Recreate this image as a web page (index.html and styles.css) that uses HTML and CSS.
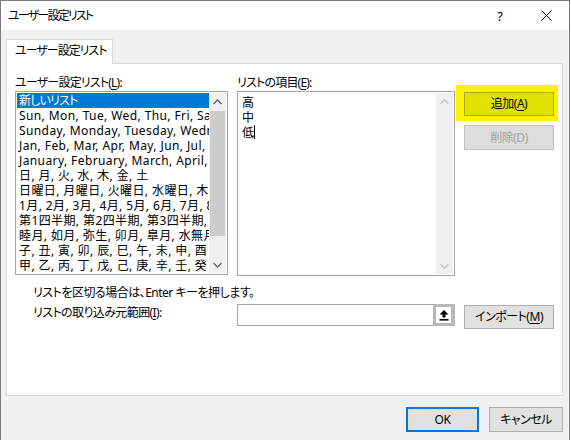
FILE: index.html
```html
<!DOCTYPE html>
<html lang="ja">
<head>
<meta charset="utf-8">
<title>ユーザー設定リスト</title>
<link rel="stylesheet" href="styles.css">
</head>
<body>
<div class="window">
  <div class="titlebar">
    <span class="title">ユーザー設定リスト</span>
    <span class="caption-btn help">?</span>
    <span class="caption-btn close">
      <svg width="11" height="11" viewBox="0 0 11 11"><path d="M0.5 0.5 L10.5 10.5 M10.5 0.5 L0.5 10.5" stroke="#000" stroke-width="1" fill="none"/></svg>
    </span>
  </div>
  <div class="client">
    <div class="tabs"><div class="tab">ユーザー設定リスト</div></div>
    <div class="panel">
      <div class="lists">
        <div class="col col-left">
          <div class="label">ユーザー設定リスト(<u>L</u>):</div>
          <div class="listbox">
            <ul class="items">
              <li class="selected">新しいリスト</li>
              <li>Sun, Mon, Tue, Wed, Thu, Fri, Sat</li>
              <li>Sunday, Monday, Tuesday, Wednesday, Thursday</li>
              <li>Jan, Feb, Mar, Apr, May, Jun, Jul, Aug</li>
              <li>January, February, March, April, May</li>
              <li>日, 月, 火, 水, 木, 金, 土</li>
              <li>日曜日, 月曜日, 火曜日, 水曜日, 木曜日</li>
              <li>1月, 2月, 3月, 4月, 5月, 6月, 7月, 8月</li>
              <li>第1四半期, 第2四半期, 第3四半期, 第4四半期</li>
              <li>睦月, 如月, 弥生, 卯月, 皐月, 水無月</li>
              <li>子, 丑, 寅, 卯, 辰, 巳, 午, 未, 申, 酉</li>
              <li>甲, 乙, 丙, 丁, 戊, 己, 庚, 辛, 壬, 癸</li>
            </ul>
            <div class="vscroll">
              <span class="arrow"><svg width="9" height="6" viewBox="0 0 9 6"><path d="M0.5 5 L4.5 1 L8.5 5" stroke="#606060" stroke-width="1.3" fill="none"/></svg></span>
              <span class="track"><span class="thumb"></span></span>
              <span class="arrow"><svg width="9" height="6" viewBox="0 0 9 6"><path d="M0.5 1 L4.5 5 L8.5 1" stroke="#606060" stroke-width="1.3" fill="none"/></svg></span>
            </div>
          </div>
        </div>
        <div class="col col-mid">
          <div class="label">リストの項目(<u>E</u>):</div>
          <div class="editbox">
            <div class="lines">
              <div>高</div>
              <div>中</div>
              <div>低<span class="caret"></span></div>
            </div>
            <div class="vscroll off">
              <span class="arrow"><svg width="9" height="6" viewBox="0 0 9 6"><path d="M0.5 5 L4.5 1 L8.5 5" stroke="#c4c4c4" stroke-width="1.3" fill="none"/></svg></span>
              <span class="track"></span>
              <span class="arrow"><svg width="9" height="6" viewBox="0 0 9 6"><path d="M0.5 1 L4.5 5 L8.5 1" stroke="#c4c4c4" stroke-width="1.3" fill="none"/></svg></span>
            </div>
          </div>
        </div>
        <div class="col col-btns">
          <div class="mark"><button class="btn btn-add">追加(<u>A</u>)</button></div>
          <button class="btn btn-del" disabled>削除(D)</button>
        </div>
      </div>
      <div class="hint">リストを区切る場合は、Enter キーを押します。</div>
      <div class="import-row">
        <span class="import-label">リストの取り込み元範囲(<u>I</u>):</span>
        <div class="refedit">
          <span class="field"></span>
          <span class="collapse">
            <svg width="12" height="12" viewBox="0 0 12 12"><path d="M6 1 L10.5 5.5 L7.5 5.5 L7.5 8.5 L4.5 8.5 L4.5 5.5 L1.5 5.5 Z" fill="#000"/><rect x="1.5" y="10" width="9" height="1.6" fill="#000"/></svg>
          </span>
        </div>
        <button class="btn btn-import">インポート(<u>M</u>)</button>
      </div>
    </div>
    <div class="footer">
      <button class="btn btn-ok">OK</button>
      <button class="btn btn-cancel">キャンセル</button>
    </div>
  </div>
</div>
</body>
</html>
```

FILE: styles.css
```css
* {
  box-sizing: border-box;
}

html, body {
  margin: 0;
  padding: 0;
  background: #ffffff;
}

body {
  font-family: "Noto Sans", "Noto Sans CJK JP", sans-serif;
  font-size: 12px;
  color: #000;
  font-feature-settings: "palt";
}

u {
  text-decoration: underline;
  text-underline-offset: 2px;
}

.window {
  width: 570px;
  height: 440px;
  border: 1px solid #7a7a7a;
  border-bottom: none;
  background: #f0f0f0;
  display: flex;
  flex-direction: column;
}

/* caption */
.titlebar {
  height: 29px;
  background: #ffffff;
  display: flex;
  align-items: center;
  padding-left: 7px;
  flex-shrink: 0;
}

.title {
  flex: 1;
  line-height: 16px;
  letter-spacing: -1.8px;
}

.caption-btn {
  width: 46px;
  height: 29px;
  display: flex;
  align-items: center;
  justify-content: center;
}

.help {
  font-size: 13px;
}

.close svg {
  display: block;
}

/* dialog body */
.client {
  padding: 9px 6px 0 5px;
  flex: 1;
  display: flex;
  flex-direction: column;
}

.tabs {
  display: flex;
}

.tab {
  width: 107px;
  height: 25px;
  border: 1px solid #d9d9d9;
  border-bottom: none;
  background: #ffffff;
  margin-bottom: -1px;
  position: relative;
  z-index: 1;
  padding-left: 8px;
  line-height: 22px;
  white-space: nowrap;
  letter-spacing: -1px;
}

.panel {
  width: 557px;
  height: 333px;
  border: 1px solid #d9d9d9;
  background: #ffffff;
  padding: 11px 0 0 8px;
}

.lists {
  display: flex;
  height: 201px;
}

.label {
  line-height: 16px;
  height: 16px;
  white-space: nowrap;
  letter-spacing: -0.8px;
}

.col-left {
  width: 213px;
}

.col-mid {
  width: 218px;
  margin-left: 9px;
}

.col-btns {
  width: 102px;
  margin-left: 1px;
  display: flex;
  flex-direction: column;
}

/* list boxes */
.listbox,
.editbox {
  border: 1px solid #a5a5a5;
  background: #ffffff;
  padding: 1px;
  display: flex;
}

.listbox {
  height: 184px;
}

.editbox {
  height: 185px;
}

.items {
  list-style: none;
  margin: 0;
  padding: 0;
  flex: 1;
  overflow: hidden;
  min-width: 0;
}

.items li {
  height: 15px;
  line-height: 15px;
  padding-left: 2px;
  white-space: nowrap;
  overflow: hidden;
  letter-spacing: 0.4px;
}

.items li.selected {
  background: #0078d7;
  color: #ffffff;
  letter-spacing: -0.8px;
}

.lines {
  flex: 1;
  padding: 2px 0 0 3px;
}

.lines div {
  height: 15px;
  line-height: 15px;
}

.caret {
  display: inline-block;
  width: 1px;
  height: 14px;
  background: #000;
  vertical-align: -2px;
}

/* vertical scroll bars */
.vscroll {
  width: 17px;
  background: #f0f0f0;
  display: flex;
  flex-direction: column;
}

.vscroll .arrow {
  height: 17px;
  display: flex;
  align-items: center;
  justify-content: center;
}

.vscroll .arrow svg {
  display: block;
}

.vscroll .track {
  flex: 1;
  display: flex;
  flex-direction: column;
}

.vscroll .thumb {
  display: block;
  margin: 1px 1px 0 1px;
  height: 125px;
  background: #cdcdcd;
}

/* buttons */
.btn {
  font: inherit;
  font-feature-settings: "palt";
  letter-spacing: -0.5px;
  color: #000;
  background: #e1e1e1;
  border: 1px solid #adadad;
  padding: 0;
  margin: 0;
  line-height: 20px;
  white-space: nowrap;
}

.mark {
  margin-top: 10px;
  background: #fff200;
  padding: 7px 4px 5px 8px;
}

.btn-add {
  display: block;
  width: 90px;
  height: 24px;
  background: #e1e100;
  border-color: #adad00;
}

.btn-del {
  width: 90px;
  height: 25px;
  margin: 4px 0 0 8px;
  background: #dddddd;
  border-color: #bfbfbf;
  color: #a0a0a0;
}

/* lower part */
.hint {
  margin-top: 9px;
  padding-left: 18px;
  line-height: 16px;
  height: 16px;
  white-space: nowrap;
  letter-spacing: -0.5px;
}

.import-row {
  margin-top: 3px;
  display: flex;
  align-items: flex-start;
}

.import-label {
  width: 222px;
  padding-left: 18px;
  line-height: 16px;
  margin-top: 1px;
  white-space: nowrap;
  letter-spacing: -0.6px;
}

.refedit {
  width: 218px;
  height: 22px;
  border: 1px solid #a5a5a5;
  background: #ffffff;
  display: flex;
}

.refedit .field {
  flex: 1;
}

.refedit .collapse {
  width: 22px;
  height: 22px;
  margin: -1px -1px 0 0;
  border: 3px solid #b7b7b7;
  border-right-width: 4px;
  background: #ffffff;
  display: flex;
  align-items: center;
  justify-content: center;
}

.refedit .collapse svg {
  display: block;
}

.btn-import {
  width: 90px;
  height: 24px;
  margin: 1px 0 0 9px;
}

.footer {
  margin-top: 11px;
  display: flex;
  justify-content: flex-end;
  gap: 10px;
}

.btn-ok {
  width: 73px;
  height: 25px;
  border: 2px solid #0078d7;
}

.btn-cancel {
  width: 74px;
  height: 25px;
}
```
